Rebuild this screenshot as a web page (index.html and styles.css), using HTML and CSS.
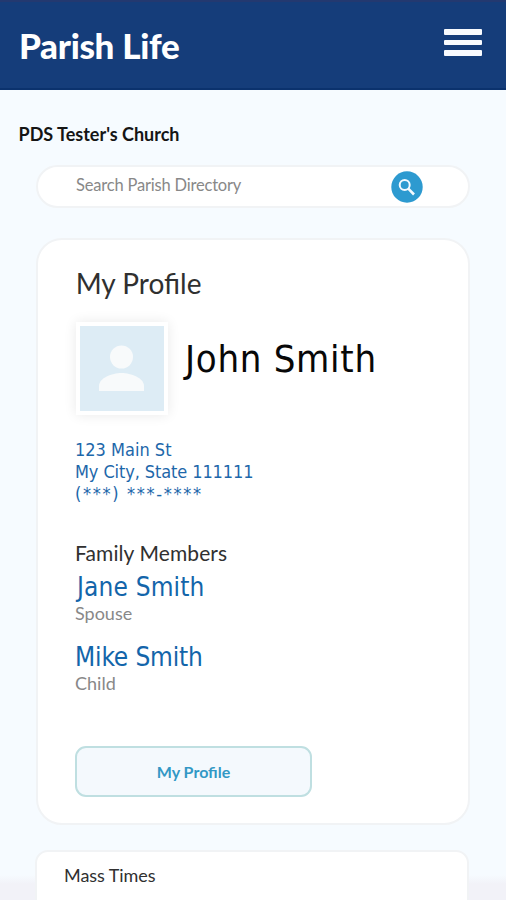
FILE: index.html
```html
<!DOCTYPE html>
<html lang="en">
<head>
<meta charset="utf-8">
<title>Parish Life</title>
<link rel="stylesheet" href="styles.css">
</head>
<body>
<header class="topbar">
  <h1 class="brand"><span>Parish Life</span></h1>
  <button class="menu" aria-label="Menu"><i></i><i></i><i></i></button>
</header>
<main class="page">
  <h2 class="church"><span>PDS Tester's Church</span></h2>
  <div class="search">
    <span class="placeholder">Search Parish Directory</span>
    <svg class="search-icon" viewBox="0 0 32 32"><circle cx="16" cy="16" r="15.700" fill="#2d9ad0"/><circle cx="13.700" cy="14" r="5" fill="none" stroke="#f4faff" stroke-width="2"/><path d="M17.300 17.700l5.700 5.800" stroke="#f4faff" stroke-width="2.600"/></svg>
  </div>
  <section class="card profile">
    <h2 class="title"><span>My Profile</span></h2>
    <div class="person">
      <div class="avatar"><svg viewBox="0 0 84 84"><circle cx="41.500" cy="31" r="11.500"/><path d="M19 65v-5c0-8 13-13 22.500-13S64 52 64 60v5z"/></svg></div>
      <span class="name">John Smith</span>
    </div>
    <address class="address"><span>123 Main St</span><br><span class="city">My City, State 111111</span><br><span class="phone">(***) ***-****</span></address>
    <h3 class="family"><span>Family Members</span></h3>
    <div class="member"><a class="spouse">Jane Smith</a><span class="role">Spouse</span></div>
    <div class="member"><a class="child">Mike Smith</a><span class="role">Child</span></div>
    <button class="action"><span>My Profile</span></button>
  </section>
  <section class="card mass"><h2><span>Mass Times</span></h2></section>
</main>
</body>
</html>
```
FILE: styles.css
```css
* { box-sizing: border-box; }
body {
  margin: 0;
  height: 900px;
  overflow: hidden;
  background: linear-gradient(#f6fbff 0 875px, #f2f2f8 884px);
  font-family: Lato, sans-serif;
  color: #303030;
}
h1, h2, h3 { margin: 0; font-weight: 400; }
.topbar {
  height: 90px;
  padding: 0 24px 0 19px;
  display: flex;
  align-items: center;
  justify-content: space-between;
  background: #153d7a;
  border-top: 2px solid #233970;
  border-bottom: 2px solid #0b326d;
}
.brand { color: #fff; font-size: 35px; line-height: 44px; font-weight: 900; letter-spacing: -.3px; }
.menu {
  display: flex;
  flex-direction: column;
  gap: 5px;
  width: 38px;
  margin-top: -5px;
  padding: 0;
  border: 0;
  background: none;
}
.menu i { height: 5.500px; background: #f8fbff; border-radius: 1px; }
.page { padding: 32px 36px 0; }
.church { margin-left: -17.500px; font-size: 18px; line-height: 24px; font-weight: 700; color: #151515; }
.search {
  height: 43px;
  margin: 19px 0 0;
  padding: 0 45.500px 0 38px;
  display: flex;
  align-items: center;
  justify-content: space-between;
  background: #fff;
  border: 2px solid #f1f3f5;
  border-radius: 22px;
}
.placeholder { font-size: 16.500px; line-height: 20px; letter-spacing: -.19px; color: #888; margin-top: -3px; }
.search-icon { width: 32px; height: 32px; }
.card { background: #fff; border: 2px solid #f1f3f5; }
.profile {
  height: 587px;
  margin-top: 30px;
  padding: 24px 37px 0;
  border-radius: 26px;
}
.title { font-size: 28px; line-height: 38px; margin-left: .7px; }
.person { display: flex; margin: 20px 0 0 1px; }
.avatar {
  width: 92px;
  height: 93px;
  flex: none;
  border: 4px solid #fff;
  background: #ddecf5;
  box-shadow: 0 0 12px #e9e9e9;
}
.avatar svg { display: block; width: 84px; height: 84px; fill: #f8fafb; }
.name, .address, .member a { font-family: "DejaVu Sans Condensed", "DejaVu Sans", sans-serif; font-stretch: condensed; }
.name { margin: 14px 0 0 17px; font-size: 38px; line-height: 46px; letter-spacing: .7px; color: #080808; white-space: nowrap; }
.address { margin-top: 24px; font-size: 18px; line-height: 22px; font-style: normal; color: #1d67aa; }
.city { letter-spacing: -.1px; }
.phone { letter-spacing: 1.650px; }
.family { margin-top: 35px; font-size: 21px; line-height: 26px; letter-spacing: .1px; }
.member { height: 70px; }
.member a { display: block; font-size: 26px; line-height: 32px; padding-top: 5px; color: #1365aa; }
.member .spouse { padding-left: 2px; letter-spacing: .15px; }
.member .child { letter-spacing: -.15px; }
.role { display: block; margin-top: -1px; font-size: 18px; line-height: 22px; color: #888; }
.action {
  display: block;
  width: 237px;
  height: 51px;
  margin-top: 40px;
  padding: 0;
  background: #f4f9fd;
  border: 2px solid #bfdfe1;
  border-radius: 11px;
  color: #3298c5;
  font: 700 16px/20px Lato, sans-serif;
}
.mass { height: 70px; margin: 25px 1px 0 -1px; padding: 10px 27px; border-radius: 13px; }
.mass h2 { font-size: 18px; line-height: 26px; letter-spacing: -.05px; }
```
